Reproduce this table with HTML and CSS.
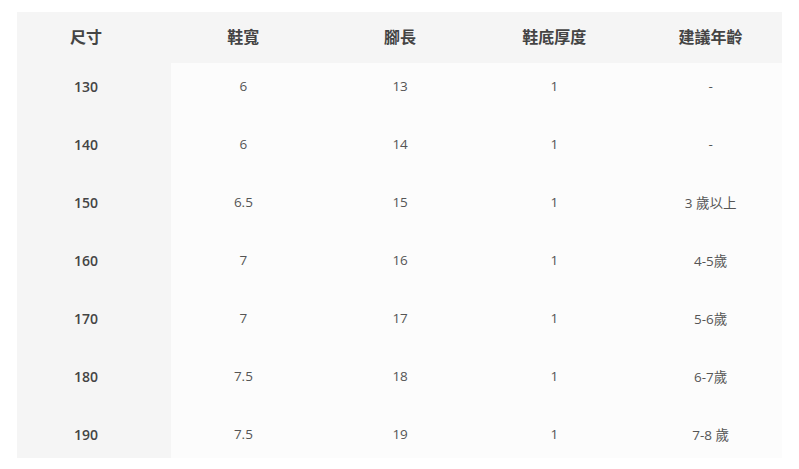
FILE: index.html
```html
<!DOCTYPE html>
<html lang="zh-Hant">
<head>
<meta charset="utf-8">
<title>尺寸表</title>
<link rel="stylesheet" href="styles.css">
</head>
<body>
<div class="size-table">
  <div class="row head">
    <div class="cell c1">尺寸</div>
    <div class="cell c2">鞋寬</div>
    <div class="cell c3">腳長</div>
    <div class="cell c4">鞋底厚度</div>
    <div class="cell c5">建議年齡</div>
  </div>
  <div class="row body first">
    <div class="cell c1">130</div>
    <div class="cell c2">6</div>
    <div class="cell c3">13</div>
    <div class="cell c4">1</div>
    <div class="cell c5">-</div>
  </div>
  <div class="row body">
    <div class="cell c1">140</div>
    <div class="cell c2">6</div>
    <div class="cell c3">14</div>
    <div class="cell c4">1</div>
    <div class="cell c5">-</div>
  </div>
  <div class="row body">
    <div class="cell c1">150</div>
    <div class="cell c2">6.5</div>
    <div class="cell c3">15</div>
    <div class="cell c4">1</div>
    <div class="cell c5">3 歲以上</div>
  </div>
  <div class="row body">
    <div class="cell c1">160</div>
    <div class="cell c2">7</div>
    <div class="cell c3">16</div>
    <div class="cell c4">1</div>
    <div class="cell c5">4-5歲</div>
  </div>
  <div class="row body">
    <div class="cell c1">170</div>
    <div class="cell c2">7</div>
    <div class="cell c3">17</div>
    <div class="cell c4">1</div>
    <div class="cell c5">5-6歲</div>
  </div>
  <div class="row body">
    <div class="cell c1">180</div>
    <div class="cell c2">7.5</div>
    <div class="cell c3">18</div>
    <div class="cell c4">1</div>
    <div class="cell c5">6-7歲</div>
  </div>
  <div class="row body last">
    <div class="cell c1">190</div>
    <div class="cell c2">7.5</div>
    <div class="cell c3">19</div>
    <div class="cell c4">1</div>
    <div class="cell c5">7-8 歲</div>
  </div>
</div>
</body>
</html>
```

FILE: styles.css
```css
html, body {
  margin: 0;
  padding: 0;
  background: #ffffff;
}

body {
  font-family: "Open Sans", "Noto Sans CJK TC", sans-serif;
  color: #555555;
}

.size-table {
  margin: 12px 0 0 17px;
  width: 765px;
  display: flex;
  flex-direction: column;
}

.row {
  display: flex;
}

.cell {
  display: flex;
  align-items: center;
  justify-content: center;
  box-sizing: border-box;
  white-space: nowrap;
}

.c1 { width: 154px; padding-right: 16px; }
.c2 { width: 152.75px; padding-right: 8px; }
.c3 { width: 152.75px; }
.c4 { width: 152.75px; padding-left: 3px; }
.c5 { width: 152.75px; padding-left: 10px; }

.head {
  height: 51px;
  background: #f5f5f5;
}

.head .cell {
  font-family: "Noto Sans CJK TC", sans-serif;
  font-weight: 700;
  font-size: 16px;
  color: #444444;
  padding-bottom: 3px;
}

.body {
  height: 58px;
  background: #fcfcfc;
}

.body .cell {
  font-size: 13.5px;
  color: #555555;
  padding-bottom: 2px;
}

.body .c1 {
  background: #f5f5f5;
  font-size: 14px;
  font-weight: 600;
  color: #444444;
}

.body.first {
  height: 53px;
}

.body.first .cell {
  padding-bottom: 7px;
}

.body.last {
  height: 52px;
}

.body.last .cell {
  padding-top: 6px;
  padding-bottom: 2px;
}
```
